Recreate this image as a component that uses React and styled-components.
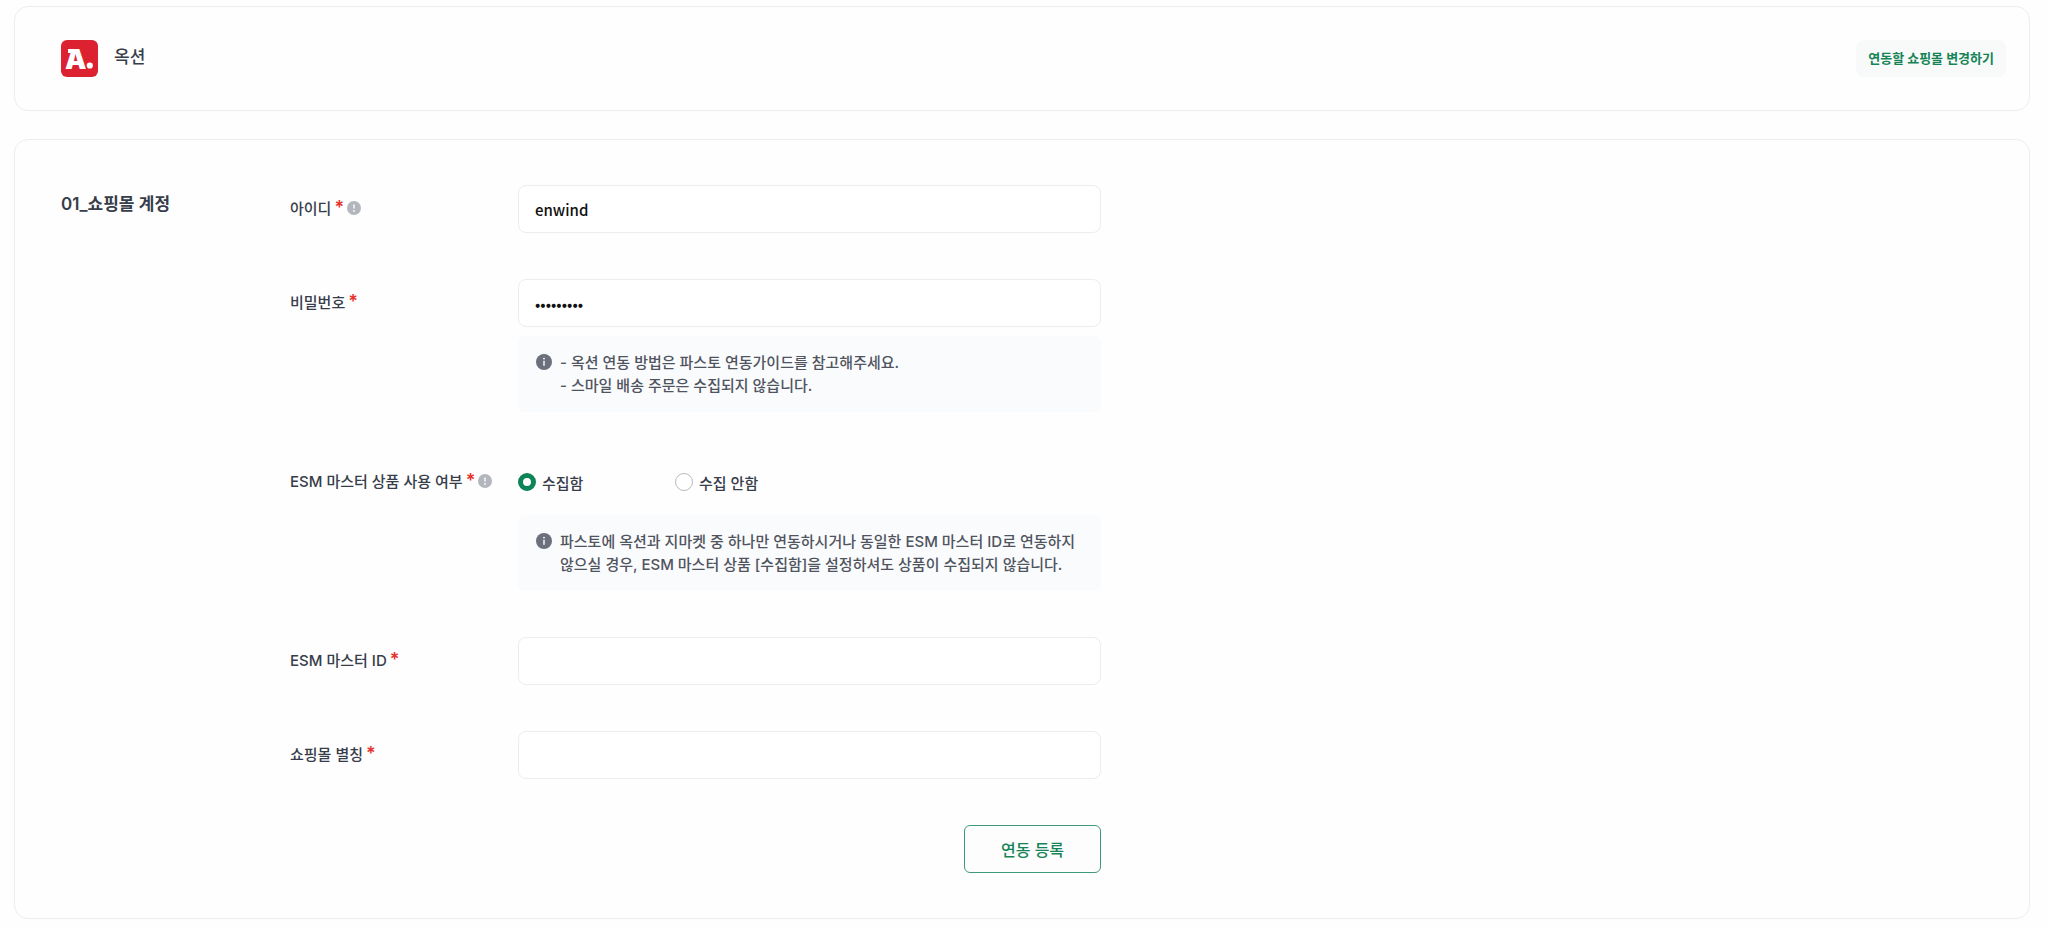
import { useState } from "react";
import styled, { createGlobalStyle } from "styled-components";

const GlobalStyle = createGlobalStyle`
    * {
        box-sizing: border-box;
    }

    body {
        margin: 0;
        background: #fefefe;
        color: #373d4a;
        font-family: Inter, "Noto Sans CJK KR", sans-serif;
        font-size: 15px;
        font-weight: 500;
    }
`;

const Page = styled.main`
    display: flex;
    flex-direction: column;
    gap: 28px;
    padding: 6px 18px 8px 14px;
`;

const Card = styled.section`
    border: 1px solid #ededed;
    border-radius: 14px;
    background: #fefefe;
`;

const Header = styled(Card)`
    display: flex;
    justify-content: space-between;
    align-items: center;
    padding: 33px 23px 33px 46px;
`;

const Mall = styled.div`
    display: flex;
    align-items: center;
    gap: 16px;
`;

const MallName = styled.h1`
    margin: 0;
    padding-bottom: 3px;
    font-size: 17px;
    font-weight: 500;
    line-height: 24px;
`;

const ChangeButton = styled.button`
    height: 37px;
    padding: 0 12px 3px;
    border: 0;
    border-radius: 8px;
    background: #f7faf9;
    color: #168357;
    font: inherit;
    font-size: 13px;
    font-weight: 700;
    cursor: pointer;
`;

const Account = styled(Card)`
    display: flex;
    padding: 45px 46px;
`;

const SectionTitle = styled.h2`
    flex: 0 0 229px;
    margin: 0;
    font-size: 17px;
    font-weight: 600;
    line-height: 38px;
`;

const Form = styled.form`
    display: flex;
    flex-direction: column;
    flex: 0 1 811px;
    gap: 46px;
`;

const Field = styled.div`
    display: grid;
    grid-template-columns: 228px 1fr;
`;

const Label = styled.div`
    display: flex;
    align-items: center;
    gap: 3px;
    height: 48px;
    padding-bottom: 3px;
`;

const Required = styled.span`
    height: 24px;
    color: #e5322d;
    font-size: 18px;
    font-weight: 600;
    line-height: 24px;
`;

const Control = styled.div`
    display: flex;
    flex-direction: column;
    gap: 9px;
`;

const Input = styled.input`
    width: 100%;
    height: 48px;
    padding: 0 16px;
    border: 1px solid #ededed;
    border-radius: 8px;
    background: #fff;
    color: #111;
    font: 500 15px "Noto Sans CJK KR", sans-serif;
    outline: none;
`;

const Note = styled.div`
    display: flex;
    gap: 8px;
    padding: 15px 18px;
    border-radius: 6px;
    background: #fafbfc;
    color: #50545f;
    line-height: 23px;

    p {
        margin: 0;
    }

    svg {
        flex: none;
        margin-top: 3px;
    }
`;

const Radios = styled.div`
    display: flex;
    align-items: center;
    height: 48px;
`;

const RadioLabel = styled.label`
    display: flex;
    align-items: center;
    flex: 0 0 157px;
    gap: 6px;
    cursor: pointer;
`;

const Radio = styled.input`
    appearance: none;
    width: 18px;
    height: 18px;
    margin: 0;
    border: 1px solid #b9bbc0;
    border-radius: 50%;
    background: #fff;

    &:checked {
        border: 5px solid #0b8457;
    }
`;

const Submit = styled.button`
    align-self: flex-end;
    width: 137px;
    height: 48px;
    border: 1px solid #3f9a78;
    border-radius: 6px;
    background: #fdfdfd;
    color: #168357;
    font: inherit;
    font-size: 16px;
    cursor: pointer;
`;

const AuctionLogo = () => (
    <svg width="37" height="37" viewBox="0 0 37 37" aria-hidden="true">
        <rect width="37" height="37" rx="6" fill="#dc2230" />
        <rect x="7" y="9" width="9" height="4" fill="#fff" />
        <text x="4" y="28.5" fill="#fff" fontFamily="Inter" fontSize="27" fontWeight="900">A</text>
        <circle cx="28.8" cy="25.5" r="3.1" fill="#fff" />
    </svg>
);

const HelpIcon = () => (
    <svg width="14" height="14" viewBox="0 0 14 14" aria-hidden="true">
        <circle cx="7" cy="7" r="7" fill="#b3b6bc" />
        <path d="M7 3.4v4.2" stroke="#fff" strokeWidth="1.4" />
        <circle cx="7" cy="10" r="0.9" fill="#fff" />
    </svg>
);

const InfoIcon = () => (
    <svg width="16" height="16" viewBox="0 0 16 16" aria-hidden="true">
        <circle cx="8" cy="8" r="8" fill="#6b707c" />
        <path d="M8 6.8v5" stroke="#fff" strokeWidth="1.4" />
        <circle cx="8" cy="4.6" r="0.9" fill="#fff" />
    </svg>
);

function FieldLabel({ id, group, help, children }) {
    return (
        <Label>
            {group ? <span id={id}>{children}</span> : <label htmlFor={id}>{children}</label>}
            <Required>*</Required>
            {help && <HelpIcon />}
        </Label>
    );
}

function App() {
    const [values, setValues] = useState({ userId: "enwind", password: "auction12", masterId: "", alias: "" });
    const [collect, setCollect] = useState("yes");

    const bind = (name) => ({
        id: name,
        value: values[name],
        onChange: (e) => setValues({ ...values, [name]: e.target.value }),
    });

    return (
        <>
            <GlobalStyle />
            <Page>
                <Header as="header">
                    <Mall>
                        <AuctionLogo />
                        <MallName>옥션</MallName>
                    </Mall>
                    <ChangeButton type="button">연동할 쇼핑몰 변경하기</ChangeButton>
                </Header>
                <Account>
                    <SectionTitle>01_쇼핑몰 계정</SectionTitle>
                    <Form onSubmit={(e) => e.preventDefault()}>
                        <Field>
                            <FieldLabel id="userId" help>아이디</FieldLabel>
                            <Input type="text" {...bind("userId")} />
                        </Field>
                        <Field>
                            <FieldLabel id="password">비밀번호</FieldLabel>
                            <Control>
                                <Input type="password" {...bind("password")} />
                                <Note>
                                    <InfoIcon />
                                    <p>
                                        - 옥션 연동 방법은 파스토 연동가이드를 참고해주세요.
                                        <br />
                                        - 스마일 배송 주문은 수집되지 않습니다.
                                    </p>
                                </Note>
                            </Control>
                        </Field>
                        <Field>
                            <FieldLabel id="collect" group help>ESM 마스터 상품 사용 여부</FieldLabel>
                            <Control>
                                <Radios role="radiogroup" aria-labelledby="collect">
                                    <RadioLabel>
                                        <Radio type="radio" name="collect" checked={collect === "yes"} onChange={() => setCollect("yes")} />
                                        수집함
                                    </RadioLabel>
                                    <RadioLabel>
                                        <Radio type="radio" name="collect" checked={collect === "no"} onChange={() => setCollect("no")} />
                                        수집 안함
                                    </RadioLabel>
                                </Radios>
                                <Note>
                                    <InfoIcon />
                                    <p>
                                        파스토에 옥션과 지마켓 중 하나만 연동하시거나 동일한 ESM 마스터 ID로 연동하지
                                        <br />
                                        않으실 경우, ESM 마스터 상품 [수집함]을 설정하셔도 상품이 수집되지 않습니다.
                                    </p>
                                </Note>
                            </Control>
                        </Field>
                        <Field>
                            <FieldLabel id="masterId">ESM 마스터 ID</FieldLabel>
                            <Input type="text" {...bind("masterId")} />
                        </Field>
                        <Field>
                            <FieldLabel id="alias">쇼핑몰 별칭</FieldLabel>
                            <Input type="text" {...bind("alias")} />
                        </Field>
                        <Submit type="submit">연동 등록</Submit>
                    </Form>
                </Account>
            </Page>
        </>
    );
}

export default App;
